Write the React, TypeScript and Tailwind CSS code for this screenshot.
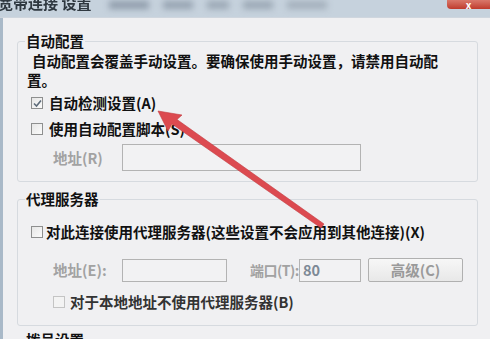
import React from "react";

const FONT = { fontFamily: '"Noto Sans CJK SC", "Noto Sans", sans-serif' };

function Check({ checked, disabled }: { checked?: boolean; disabled?: boolean }) {
  return (
    <span
      className={`flex h-[12px] w-[12px] shrink-0 items-center justify-center border ${
        disabled ? "border-[#c4c4c4] bg-[#f3f3f3]" : "border-[#8e8f8f] bg-gradient-to-br from-[#e6e6e6] to-[#fbfbfb]"
      }`}
    >
      {checked && (
        <svg width="9" height="9" viewBox="0 0 9 9">
          <path d="M1 4.5 L3.5 7 L8 1.5" fill="none" stroke="#5d6b7a" strokeWidth="1.6" />
        </svg>
      )}
    </span>
  );
}

export default function App() {
  return (
    <div
      className="relative h-[339px] w-[490px] overflow-hidden bg-[#f0f0f2] text-[14.5px] text-[#111] [text-spacing-trim:space-all]"
      style={FONT}
    >
      {/* title bar */}
      <div className="flex h-[17px] items-start overflow-hidden bg-[#c6d2dd]">
        <span className="-mt-[6px] ml-[-2px] whitespace-nowrap text-[15px] font-bold leading-[18px] text-[#2f3840] blur-[0.4px]">
          宽带连接 设置
        </span>
        <div className="ml-[18px] mt-[1px] flex gap-[14px] blur-[3px]">
          <span className="h-[8px] w-[40px] bg-[#8f9cab]" />
          <span className="h-[8px] w-[30px] bg-[#95a2b0]" />
          <span className="h-[8px] w-[22px] bg-[#9aa7b4]" />
          <span className="h-[8px] w-[30px] bg-[#9aa7b4]" />
          <span className="h-[8px] w-[40px] bg-[#a3afbb]" />
        </div>
        <div className="ml-auto flex h-[9px] w-[43px] items-end justify-center rounded-bl-[4px] bg-gradient-to-b from-[#d9776a] to-[#bf3a2c] text-[10px] font-bold leading-[9px] text-white">
          x
        </div>
      </div>

      {/* body */}
      <div className="flex h-[322px] border-t border-[#cfd6de]">
        <div className="w-[3px] bg-[#a9b9c8]" />
        <div className="ml-[14px] flex w-[461px] flex-col">
          {/* group 1 */}
          <fieldset className="mt-[14px] rounded-[3px] border border-[#d6dadf] pb-[10px]">
            <legend className="ml-[7px] px-[1px] font-bold leading-[18px]">自动配置</legend>
            <div className="ml-[9px] mt-[1px] flex flex-col font-bold leading-[19px]">
              <span className="ml-[5px] whitespace-nowrap">自动配置会覆盖手动设置。要确保使用手动设置，请禁用自动配</span>
              <span className="whitespace-nowrap">置。</span>
            </div>
            <div className="ml-[13px] mt-[4px] flex h-[20px] items-center gap-[6px] font-bold">
              <Check checked />
              <span>自动检测设置(A)</span>
            </div>
            <div className="ml-[13px] mt-[6px] flex h-[20px] items-center gap-[6px] font-bold">
              <Check />
              <span>使用自动配置脚本(S)</span>
            </div>
            <div className="mt-[5px] flex h-[27px] items-center">
              <span className="ml-[35px] w-[69px] font-bold text-[#a2a2a2]">地址(R)</span>
              <div className="h-[27px] w-[239px] border border-[#b3b3b3] bg-[#f2f2f3]" />
            </div>
          </fieldset>

          {/* group 2 */}
          <fieldset className="mt-[8px] rounded-[3px] border border-[#d6dadf] pb-[13px]">
            <legend className="ml-[7px] px-[1px] font-bold leading-[18px]">代理服务器</legend>
            <div className="ml-[13px] mt-[14px] flex h-[20px] items-center gap-[3px] font-bold">
              <Check />
              <span>对此连接使用代理服务器(这些设置不会应用到其他连接)(X)</span>
            </div>
            <div className="mt-[16px] flex h-[24px] items-center">
              <span className="ml-[35px] w-[69px] font-bold text-[#a2a2a2]">地址(E):</span>
              <div className="h-[23px] w-[105px] border border-[#b3b3b3] bg-[#f2f2f3]" />
              <span className="ml-[23px] w-[49px] whitespace-nowrap text-[14px] font-bold tracking-[-0.5px] text-[#a2a2a2]">
                端口(T):
              </span>
              <div className="flex h-[23px] w-[62px] items-center border border-[#b3b3b3] bg-[#f2f2f3] pl-[3px] font-bold text-[#7d8996]">
                80
              </div>
              <div className="ml-[7px] flex h-[24px] w-[95px] items-center justify-center rounded-[2px] border border-[#b0b0b0] bg-gradient-to-b from-[#f7f7f7] to-[#e8e8e8] font-bold text-[#9a9a9a]">
                高级(C)
              </div>
            </div>
            <div className="ml-[35px] mt-[10px] flex h-[20px] items-center gap-[5px] font-bold text-[#333]">
              <Check disabled />
              <span>对于本地地址不使用代理服务器(B)</span>
            </div>
          </fieldset>

          {/* group 3 */}
          <fieldset className="mt-[5px] rounded-[3px] border border-[#d6dadf] pb-[10px]">
            <legend className="ml-[7px] px-[1px] font-bold leading-[18px]">拨号设置</legend>
            <div className="h-[20px]" />
          </fieldset>
        </div>
      </div>

      {/* red arrow annotation */}
      <svg className="pointer-events-none absolute left-0 top-0" width="490" height="339" viewBox="0 0 490 339">
        <path
          d="M158 111 L182 115 L177 119.5 L324 224 L321 228 L172 124 L168 131 Z"
          fill="#dc4a50"
          stroke="#c23a40"
          strokeWidth="0.6"
          strokeLinejoin="round"
        />
      </svg>
    </div>
  );
}
